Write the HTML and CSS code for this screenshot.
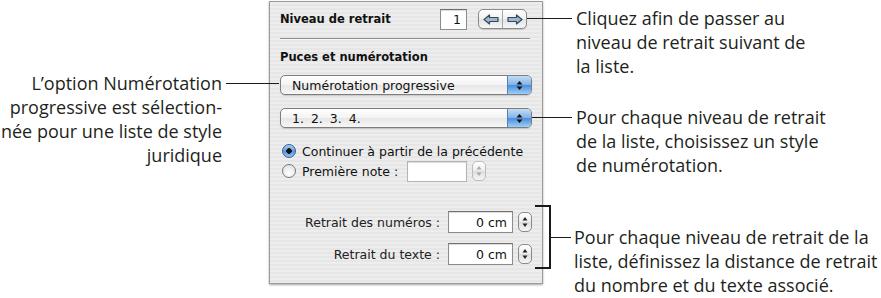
FILE: index.html
```html
<!DOCTYPE html>
<html lang="fr">
<head>
    <meta charset="UTF-8">
    <title>Puces et numérotation</title>
    <link rel="stylesheet" href="styles.css">
</head>
<body>
    <div class="figure">

        <div class="col-left">
            <div class="callout callout-left">
                <p class="callout-text text-right">L’option Numérotation<br>progressive est sélection-<br>née pour une liste de style<br>juridique</p>
                <span class="leader leader-left"></span>
            </div>
        </div>

        <div class="panel">
            <div class="row-niveau">
                <span class="label-bold">Niveau de retrait</span>
                <span class="field field-niveau">1</span>
                <div class="segmented">
                    <span class="seg">
                        <svg width="16" height="11" viewBox="0 0 16 11"><path d="M1 5.5 L6.5 1 V3.5 H15 V7.5 H6.5 V10 Z" fill="#9fb6cf" stroke="#35495e" stroke-width="1.2" stroke-linejoin="round"/></svg>
                    </span>
                    <span class="seg">
                        <svg width="16" height="11" viewBox="0 0 16 11"><path d="M15 5.5 L9.5 1 V3.5 H1 V7.5 H9.5 V10 Z" fill="#9fb6cf" stroke="#35495e" stroke-width="1.2" stroke-linejoin="round"/></svg>
                    </span>
                </div>
            </div>

            <div class="separator"></div>

            <div class="label-bold heading">Puces et numérotation</div>

            <div class="popup popup-first">
                <span class="popup-label">Numérotation progressive</span>
                <span class="popup-cap">
                    <svg width="7" height="11" viewBox="0 0 7 11"><path d="M3.5 1 L6.5 4.5 H0.5 Z M3.5 10 L6.5 6.5 H0.5 Z" fill="#111"/></svg>
                </span>
            </div>

            <div class="popup popup-second">
                <span class="popup-label numbers">1. 2. 3. 4.</span>
                <span class="popup-cap">
                    <svg width="7" height="11" viewBox="0 0 7 11"><path d="M3.5 1 L6.5 4.5 H0.5 Z M3.5 10 L6.5 6.5 H0.5 Z" fill="#111"/></svg>
                </span>
            </div>

            <div class="radio-row radio-first">
                <span class="radio checked"></span>
                <span>Continuer à partir de la précédente</span>
            </div>
            <div class="radio-row radio-second">
                <span class="radio"></span>
                <span>Première note :</span>
                <span class="field field-note"></span>
                <span class="stepper disabled">
                    <svg width="6" height="14" viewBox="0 0 6 14"><path d="M3 2 L5.5 5.5 H0.5 Z M3 12 L5.5 8.5 H0.5 Z" fill="#aaa"/></svg>
                </span>
            </div>

            <div class="retrait-row retrait-first">
                <span class="retrait-label">Retrait des numéros :</span>
                <span class="field field-cm">0 cm</span>
                <span class="stepper">
                    <svg width="6" height="14" viewBox="0 0 6 14"><path d="M3 2 L5.5 5.5 H0.5 Z M3 12 L5.5 8.5 H0.5 Z" fill="#222"/></svg>
                </span>
            </div>
            <div class="retrait-row retrait-second">
                <span class="retrait-label">Retrait du texte :</span>
                <span class="field field-cm">0 cm</span>
                <span class="stepper">
                    <svg width="6" height="14" viewBox="0 0 6 14"><path d="M3 2 L5.5 5.5 H0.5 Z M3 12 L5.5 8.5 H0.5 Z" fill="#222"/></svg>
                </span>
            </div>
        </div>

        <div class="col-right">
            <div class="callout callout-arrows">
                <span class="leader leader-arrows"></span>
                <p class="callout-text">Cliquez afin de passer au<br>niveau de retrait suivant de<br>la liste.</p>
            </div>
            <div class="callout callout-style">
                <span class="leader leader-style"></span>
                <p class="callout-text">Pour chaque niveau de retrait<br>de la liste, choisissez un style<br>de numérotation.</p>
            </div>
            <div class="callout callout-bracket">
                <span class="bracket"></span>
                <span class="leader leader-bracket"></span>
                <p class="callout-text">Pour chaque niveau de retrait de la<br>liste, définissez la distance de retrait<br>du nombre et du texte associé.</p>
            </div>
        </div>

    </div>
</body>
</html>
```

FILE: styles.css
```css
body {
    margin: 0;
    padding: 0;
    background-color: #ffffff;
    width: 881px;
    height: 298px;
    overflow: hidden;
}

.figure {
    display: flex;
    align-items: flex-start;
}

/* textes des légendes */
.callout-text {
    margin: 0;
    font-family: "Open Sans", sans-serif;
    font-size: 18px;
    line-height: 24px;
    color: #231f20;
    white-space: nowrap;
}

.text-right {
    text-align: right;
}

.callout {
    display: flex;
    align-items: flex-start;
}

.leader {
    position: relative;
    z-index: 2;
    display: block;
    height: 1px;
    background-color: #1a1a1a;
    margin-top: 12px;
}

.col-left {
    width: 269px;
    flex-shrink: 0;
    padding-top: 71px;
}

.callout-left {
    justify-content: flex-end;
}

.leader-left {
    width: 53px;
    margin-left: 4px;
    margin-right: -10px;
}

.col-right {
    flex: 1;
}

.callout-arrows {
    margin-top: 6px;
}

    .leader-arrows {
        width: 45px;
        margin-left: -16px;
        margin-right: 4px;
    }

.callout-style {
    margin-top: 27px;
}

    .leader-style {
        width: 40px;
        margin-left: -11px;
        margin-right: 4px;
    }

.callout-bracket {
    margin-top: 28px;
}

    .bracket {
        display: block;
        width: 14px;
        height: 60px;
        margin-left: -8px;
        border: 2px solid #1a1a1a;
        border-left: none;
        flex-shrink: 0;
    }

    .leader-bracket {
        width: 20px;
        margin-top: 32px;
        margin-right: 3px;
    }

    .callout-bracket .callout-text {
        margin-top: 20px;
    }

/* inspecteur */
.panel {
    width: 252px;
    flex-shrink: 0;
    margin-top: 1px;
    padding: 0 10px 18px 10px;
    border: 1px solid #9a9a9a;
    box-shadow: 0 1px 2px rgba(0, 0, 0, 0.35);
    background: repeating-linear-gradient(#ededed 0, #ededed 2px, #e6e6e6 2px, #e6e6e6 4px);
    font-family: "DejaVu Sans", sans-serif;
    font-size: 12.5px;
    color: #111;
}

.label-bold {
    font-weight: bold;
    font-size: 11.5px;
}

.row-niveau {
    display: flex;
    align-items: center;
    height: 22px;
    margin-top: 6px;
}

    .row-niveau .label-bold {
        flex: 1;
    }

.field {
    display: flex;
    align-items: center;
    justify-content: flex-end;
    box-sizing: border-box;
    background-color: #fff;
    border: 1px solid #8c8c8c;
    border-top-color: #6f6f6f;
    box-shadow: inset 0 1px 1px rgba(0, 0, 0, 0.15);
    padding-right: 5px;
}

.field-niveau {
    width: 27px;
    height: 21px;
    margin-right: 11px;
}

.segmented {
    display: flex;
    width: 49px;
    height: 20px;
    margin-right: 5px;
    box-sizing: border-box;
    border: 1px solid #8a8a8a;
    border-radius: 5px;
    background: linear-gradient(#ffffff, #f0f0f0 50%, #e2e2e2 51%, #f6f6f6);
    box-shadow: 0 1px 1px rgba(0, 0, 0, 0.15);
    overflow: hidden;
}

    .segmented .seg {
        flex: 1;
        display: flex;
        align-items: center;
        justify-content: center;
    }

        .segmented .seg + .seg {
            border-left: 1px solid #a8a8a8;
        }

.separator {
    margin-top: 8px;
    height: 1px;
    background-color: #8d8d8d;
    border-bottom: 1px solid #f8f8f8;
    margin-right: 2px;
}

.heading {
    margin-top: 10px;
    line-height: 14px;
}

.popup {
    display: flex;
    align-items: stretch;
    height: 20px;
    box-sizing: border-box;
    border: 1px solid #7d7d7d;
    border-radius: 5px;
    background: linear-gradient(#ffffff, #f3f3f3 50%, #e6e6e6 51%, #f7f7f7);
    box-shadow: 0 1px 1px rgba(0, 0, 0, 0.15);
    overflow: hidden;
}

.popup-first {
    margin-top: 11px;
}

.popup-second {
    margin-top: 13px;
}

.popup-label {
    flex: 1;
    display: flex;
    align-items: center;
    padding-left: 11px;
}

.numbers {
    word-spacing: 3px;
}

.popup-cap {
    width: 23px;
    display: flex;
    align-items: center;
    justify-content: center;
    border-left: 1px solid #5a7fb0;
    background: linear-gradient(#c4dcf5, #7fb2ea 50%, #4a8cdc 51%, #9cd0fa);
}

.radio-row {
    display: flex;
    align-items: center;
}

.radio-first {
    margin-top: 14px;
    height: 18px;
}

.radio-second {
    height: 22px;
}

.radio {
    width: 14px;
    height: 14px;
    box-sizing: border-box;
    border-radius: 50%;
    border: 1px solid #777;
    background: radial-gradient(circle at 50% 70%, #ffffff, #dcdcdc);
    margin: 0 6px 0 2px;
}

    .radio.checked {
        border-color: #3a5f93;
        background: radial-gradient(circle, #111 0, #111 2.5px, transparent 3px), linear-gradient(#a9cdf3, #5b98e0 55%, #8dc4f8);
    }

.field-note {
    width: 60px;
    height: 21px;
    margin-left: 9px;
    border-color: #b3b3b3;
}

.stepper {
    display: flex;
    align-items: center;
    justify-content: center;
    width: 14px;
    height: 20px;
    box-sizing: border-box;
    border: 1px solid #8a8a8a;
    border-radius: 5px;
    background: linear-gradient(#ffffff, #ededed 50%, #dddddd 51%, #f5f5f5);
    margin-left: 5px;
}

    .stepper.disabled {
        border-color: #bcbcbc;
    }

.retrait-row {
    display: flex;
    align-items: center;
    justify-content: flex-end;
    height: 22px;
}

.retrait-first {
    margin-top: 29px;
}

.retrait-second {
    margin-top: 10px;
}

.retrait-label {
    color: #222;
    margin-right: 8px;
}

.field-cm {
    width: 65px;
    height: 22px;
}
```
